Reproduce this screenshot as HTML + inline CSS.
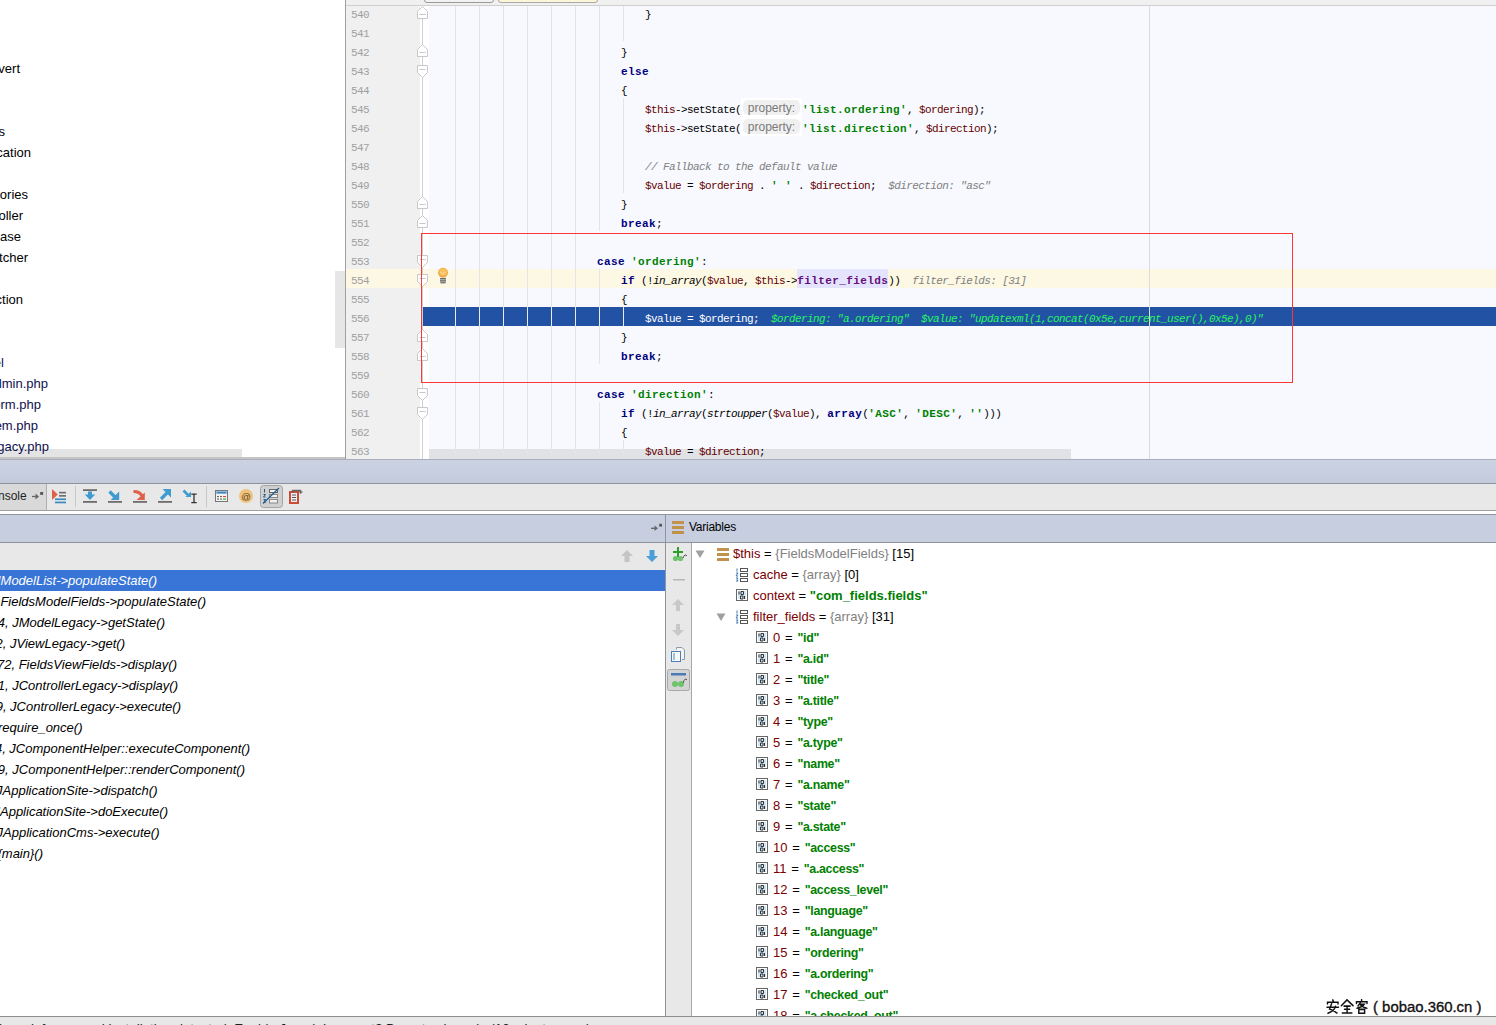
<!DOCTYPE html>
<html><head><meta charset="utf-8">
<style>
*{margin:0;padding:0;box-sizing:border-box}
html,body{width:1496px;height:1025px;overflow:hidden;background:#fff;font-family:"Liberation Sans",sans-serif}
.a{position:absolute}
#tree{left:0;top:0;width:345px;height:459px;background:#fff;overflow:hidden}
#tree .t{position:absolute;font-size:13px;line-height:21px;height:21px;padding-top:1px;color:#000;white-space:nowrap}
#tree .m{color:#101050}
.ln{position:absolute;left:351px;font-family:"Liberation Mono",monospace;font-size:11px;letter-spacing:-0.6px;color:#a0a0a0;height:19px;line-height:19px;padding-top:3px}
.code{position:absolute;font-family:"Liberation Mono",monospace;font-size:11px;letter-spacing:-0.6px;white-space:pre;height:19px;line-height:19px;color:#000;padding-top:3px}
.kw{color:#000080;font-weight:bold;letter-spacing:0.4px}
.st{color:#008000;font-weight:bold;letter-spacing:0.4px}
.v{color:#660000}
.it{font-style:italic}
.cm{color:#808080;font-style:italic}
.hint{color:#808080;font-style:italic}
.fld{color:#660e7a;font-weight:bold;letter-spacing:0.4px;background:#e4e4ff;display:inline-block;height:19px;margin-top:-3px;padding-top:3px;vertical-align:top}
.wh{color:#fff}
.gv{color:#25f560;font-style:italic}
.prop{display:inline-block;width:61px;height:19px;margin-top:-3px;vertical-align:top;background:#fff;font-family:"Liberation Sans",sans-serif;font-size:12px;letter-spacing:0;color:#7a7a7a;text-align:center;padding:2px 2px 0 2px}
.prop i{display:block;font-style:normal;height:15px;line-height:17px;background:#f0f0f0;border-radius:5px}
.fr{position:absolute;font-style:italic;font-size:13px;white-space:nowrap;color:#000;line-height:21px;height:21px}
.vr{position:absolute;font-size:13px;white-space:nowrap;line-height:21px;height:21px;color:#000}
.vr .n{color:#7a0000}
.vr .g{color:#808080}
.vr .s{color:#008000;font-weight:bold}
.vr.ix{word-spacing:1.2px}
.vr.ix .s{letter-spacing:-0.3px;word-spacing:0;font-size:12.4px}
</style></head><body>
<div id="tree" class="a">
<div class="a" style="left:335px;top:271px;width:10px;height:77px;background:#e6e6e6"></div>
<div class="a" style="left:0;top:449px;width:242px;height:8px;background:#e4e4e4"></div>
<div class="a" style="left:0;top:457px;width:345px;height:2px;background:#c4c4c4"></div>
<div class="t" style="right:325px;top:57px">convert</div>
<div class="t" style="right:340px;top:120px">errors</div>
<div class="t" style="right:314px;top:141px">application</div>
<div class="t" style="right:317px;top:183px">categories</div>
<div class="t" style="right:322px;top:204px">controller</div>
<div class="t" style="right:324px;top:225px">database</div>
<div class="t" style="right:317px;top:246px">dispatcher</div>
<div class="t" style="right:322px;top:288px">connection</div>
<div class="t m" style="right:341px;top:351px">model</div>
<div class="t m" style="right:297px;top:372px">admin.php</div>
<div class="t m" style="right:304px;top:393px">form.php</div>
<div class="t m" style="right:307px;top:414px">item.php</div>
<div class="t m" style="right:296px;top:435px">legacy.php</div>
</div>
<div class="a" style="left:345px;top:0;width:1151px;height:459px;background:#f7f9fe"></div>
<div class="a" style="left:345px;top:0;width:1151px;height:6px;background:#f0f0f0;border-bottom:1px solid #cfcfcf"></div>
<div class="a" style="left:424px;top:-4px;width:70px;height:7px;background:#f2f2f2;border:1px solid #9a9a9a;border-radius:0 0 3px 3px"></div>
<div class="a" style="left:498px;top:-4px;width:100px;height:7px;background:#fcf6d6;border:1px solid #a8a8a8;border-radius:0 0 3px 3px"></div>
<div class="a" style="left:345px;top:0;width:1px;height:459px;background:#a0a0a0"></div>
<div class="a" style="left:346px;top:6px;width:74px;height:453px;background:#f0f0f0"></div>
<div class="a" style="left:420px;top:6px;width:9px;height:453px;background:#fff"></div>
<div class="a" style="left:346px;top:269px;width:1150px;height:19px;background:#fdf8e4"></div>
<div class="a" style="left:423px;top:307px;width:1073px;height:19px;background:#2252a4"></div>
<div class="a" style="left:429px;top:449px;width:642px;height:10px;background:#e0e2e6"></div>
<svg class="a" style="left:0;top:0" width="1496" height="459">
<rect x="455" y="6" width="1" height="453" fill="#e2e4e8"/>
<rect x="479" y="6" width="1" height="453" fill="#e2e4e8"/>
<rect x="503" y="6" width="1" height="453" fill="#e2e4e8"/>
<rect x="527" y="6" width="1" height="453" fill="#e2e4e8"/>
<rect x="551" y="6" width="1" height="453" fill="#e2e4e8"/>
<rect x="575" y="6" width="1" height="453" fill="#e2e4e8"/>
<rect x="599" y="6" width="1" height="225" fill="#e2e4e8"/>
<rect x="599" y="269" width="1" height="95" fill="#e2e4e8"/>
<rect x="599" y="402" width="1" height="57" fill="#e2e4e8"/>
<rect x="623" y="6" width="1" height="35" fill="#e2e4e8"/>
<rect x="623" y="98" width="1" height="95" fill="#e2e4e8"/>
<rect x="623" y="307" width="1" height="19" fill="#e2e4e8"/>
<rect x="623" y="440" width="1" height="19" fill="#e2e4e8"/>
<rect x="1149" y="6" width="1" height="453" fill="#dcdcdc"/>
<rect x="455" y="307" width="1" height="19" fill="#e6ebf5"/>
<rect x="479" y="307" width="1" height="19" fill="#e6ebf5"/>
<rect x="503" y="307" width="1" height="19" fill="#e6ebf5"/>
<rect x="527" y="307" width="1" height="19" fill="#e6ebf5"/>
<rect x="551" y="307" width="1" height="19" fill="#e6ebf5"/>
<rect x="575" y="307" width="1" height="19" fill="#e6ebf5"/>
<rect x="599" y="307" width="1" height="19" fill="#e6ebf5"/>
<rect x="623" y="307" width="1" height="19" fill="#e6ebf5"/>
<rect x="422" y="12" width="1" height="447" fill="#cfcfcf"/>
<path d="M417.5 18.5V11.5L422.5 6.5L427.5 11.5V18.5Z" fill="#fff" stroke="#c8c8c8"/>
<path d="M419.5 14.5H425.5" stroke="#c8c8c8"/>
<path d="M417.5 56.5V49.5L422.5 44.5L427.5 49.5V56.5Z" fill="#fff" stroke="#c8c8c8"/>
<path d="M419.5 52.5H425.5" stroke="#c8c8c8"/>
<path d="M417.5 208.5V201.5L422.5 196.5L427.5 201.5V208.5Z" fill="#fff" stroke="#c8c8c8"/>
<path d="M419.5 204.5H425.5" stroke="#c8c8c8"/>
<path d="M417.5 227.5V220.5L422.5 215.5L427.5 220.5V227.5Z" fill="#fff" stroke="#c8c8c8"/>
<path d="M419.5 223.5H425.5" stroke="#c8c8c8"/>
<path d="M417.5 341.5V334.5L422.5 329.5L427.5 334.5V341.5Z" fill="#fff" stroke="#c8c8c8"/>
<path d="M419.5 337.5H425.5" stroke="#c8c8c8"/>
<path d="M417.5 360.5V353.5L422.5 348.5L427.5 353.5V360.5Z" fill="#fff" stroke="#c8c8c8"/>
<path d="M419.5 356.5H425.5" stroke="#c8c8c8"/>
<path d="M417.5 65.5H427.5V72.5L422.5 77.5L417.5 72.5Z" fill="#fff" stroke="#c8c8c8"/>
<path d="M419.5 69.5H425.5" stroke="#c8c8c8"/>
<path d="M417.5 255.5H427.5V262.5L422.5 267.5L417.5 262.5Z" fill="#fff" stroke="#c8c8c8"/>
<path d="M419.5 259.5H425.5" stroke="#c8c8c8"/>
<path d="M417.5 274.5H427.5V281.5L422.5 286.5L417.5 281.5Z" fill="#fff" stroke="#c8c8c8"/>
<path d="M419.5 278.5H425.5" stroke="#c8c8c8"/>
<path d="M417.5 388.5H427.5V395.5L422.5 400.5L417.5 395.5Z" fill="#fff" stroke="#c8c8c8"/>
<path d="M419.5 392.5H425.5" stroke="#c8c8c8"/>
<path d="M417.5 407.5H427.5V414.5L422.5 419.5L417.5 414.5Z" fill="#fff" stroke="#c8c8c8"/>
<path d="M419.5 411.5H425.5" stroke="#c8c8c8"/>
<circle cx="443" cy="272.8" r="5.6" fill="#fffef5" opacity="0.8"/><circle cx="443" cy="272.8" r="5" fill="#f2ad45"/><circle cx="443" cy="272" r="3.6" fill="#f7c25e"/>
<path d="M440.5 272.3h1M444.5 272.3h1M442.3 273.8h1.4" stroke="#fff6d0" stroke-width="1"/>
<rect x="440" y="277.8" width="6" height="5.4" rx="1" fill="#b4b0a8"/><rect x="440" y="278" width="6" height="1.1" fill="#6f7072"/><rect x="440" y="280.2" width="6" height="1.1" fill="#6f7072"/><rect x="440.6" y="282.2" width="4.8" height="1.1" fill="#6f7072"/>
<rect x="421.5" y="233.5" width="871" height="149" fill="none" stroke="#ff3535"/>
</svg>
<div class="ln" style="top:3px">540</div>
<div class="ln" style="top:22px">541</div>
<div class="ln" style="top:41px">542</div>
<div class="ln" style="top:60px">543</div>
<div class="ln" style="top:79px">544</div>
<div class="ln" style="top:98px">545</div>
<div class="ln" style="top:117px">546</div>
<div class="ln" style="top:136px">547</div>
<div class="ln" style="top:155px">548</div>
<div class="ln" style="top:174px">549</div>
<div class="ln" style="top:193px">550</div>
<div class="ln" style="top:212px">551</div>
<div class="ln" style="top:231px">552</div>
<div class="ln" style="top:250px">553</div>
<div class="ln" style="top:269px">554</div>
<div class="ln" style="top:288px">555</div>
<div class="ln" style="top:307px">556</div>
<div class="ln" style="top:326px">557</div>
<div class="ln" style="top:345px">558</div>
<div class="ln" style="top:364px">559</div>
<div class="ln" style="top:383px">560</div>
<div class="ln" style="top:402px">561</div>
<div class="ln" style="top:421px">562</div>
<div class="ln" style="top:440px">563</div>
<div class="code" style="top:3px;left:645px">}</div>
<div class="code" style="top:41px;left:621px">}</div>
<div class="code" style="top:60px;left:621px"><span class="kw">else</span></div>
<div class="code" style="top:79px;left:621px">{</div>
<div class="code" style="top:98px;left:645px"><span class="v">$this</span>-&gt;setState(<span class="prop"><i>property:</i></span><span class="st">'list.ordering'</span>, <span class="v">$ordering</span>);</div>
<div class="code" style="top:117px;left:645px"><span class="v">$this</span>-&gt;setState(<span class="prop"><i>property:</i></span><span class="st">'list.direction'</span>, <span class="v">$direction</span>);</div>
<div class="code" style="top:155px;left:645px"><span class="cm">// Fallback to the default value</span></div>
<div class="code" style="top:174px;left:645px"><span class="v">$value</span> = <span class="v">$ordering</span> . <span class="st">' '</span> . <span class="v">$direction</span>;  <span class="hint">$direction: "asc"</span></div>
<div class="code" style="top:193px;left:621px">}</div>
<div class="code" style="top:212px;left:621px"><span class="kw">break</span>;</div>
<div class="code" style="top:250px;left:597px"><span class="kw">case</span> <span class="st">'ordering'</span>:</div>
<div class="code" style="top:269px;left:621px"><span class="kw">if</span> (!<span class="it">in_array</span>(<span class="v">$value</span>, <span class="v">$this</span>-&gt;<span class="fld">filter_fields</span>))  <span class="hint">filter_fields: [31]</span></div>
<div class="code" style="top:288px;left:621px">{</div>
<div class="code" style="top:307px;left:645px"><span class="wh">$value = $ordering;  </span><span class="gv">$ordering: "a.ordering"  $value: "updatexml(1,concat(0x5e,current_user(),0x5e),0)"</span></div>
<div class="code" style="top:326px;left:621px">}</div>
<div class="code" style="top:345px;left:621px"><span class="kw">break</span>;</div>
<div class="code" style="top:383px;left:597px"><span class="kw">case</span> <span class="st">'direction'</span>:</div>
<div class="code" style="top:402px;left:621px"><span class="kw">if</span> (!<span class="it">in_array</span>(<span class="it">strtoupper</span>(<span class="v">$value</span>), <span class="kw">array</span>(<span class="st">'ASC'</span>, <span class="st">'DESC'</span>, <span class="st">''</span>)))</div>
<div class="code" style="top:421px;left:621px">{</div>
<div class="code" style="top:440px;left:645px"><span class="v">$value</span> = <span class="v">$direction</span>;</div>
<div class="a" style="left:0;top:459px;width:1496px;height:24px;background:linear-gradient(#cbd3e3,#c2cadc);border-top:1px solid #a8aebb"></div>
<!-- toolbar -->
<div class="a" style="left:0;top:483px;width:1496px;height:28px;background:#e8e8e8;border-top:1px solid #8d939e;border-bottom:1px solid #a0a0a0"></div>
<div class="a" style="left:0;top:484px;width:47px;height:26px;background:#d9d9d9;border-right:1px solid #b0b0b0"></div>
<div class="a" style="left:-2px;top:486px;font-size:12px;line-height:20px;color:#222;white-space:nowrap">nsole</div>
<svg class="a" style="left:0;top:481px" width="320" height="30">
 <path d="M32 15.5H36" stroke="#666" stroke-width="1.3"/><path d="M35.5 12.6L39 15.5L35.5 18.4Z" fill="#666"/><rect x="40.2" y="11" width="2.9" height="2.9" fill="#555"/>
 <path d="M52 8L57.8 13.5L52 19Z" fill="#e0604c"/><rect x="59" y="10.8" width="7" height="1.7" fill="#707070"/><rect x="59" y="14" width="7" height="1.7" fill="#707070"/><rect x="55" y="17.4" width="11" height="1.7" fill="#3d88bd"/><rect x="55" y="20.6" width="11" height="1.7" fill="#3d88bd"/>
 <rect x="75" y="5" width="1" height="21" fill="#c8c8c8"/>
 <rect x="83" y="8.2" width="14" height="1.8" fill="#6d6d6d"/><rect x="88" y="10.5" width="4" height="3.5" fill="#3d9bd0"/><path d="M84.8 13.5H95.2L90 19Z" fill="#3d9bd0"/><rect x="83" y="20" width="14" height="1.8" fill="#6d6d6d"/>
 <path d="M109.5 10.5L116 17" stroke="#3d9bd0" stroke-width="3.2"/><path d="M119.2 10.5V19H110.7Z" fill="#3d9bd0"/><rect x="108" y="20" width="14" height="1.8" fill="#6d6d6d"/>
 <path d="M133.5 10.5Q140 10.5 142 15" fill="none" stroke="#e0604c" stroke-width="3.2"/><path d="M144.8 11.5V19H136.5Z" fill="#e0604c"/><rect x="133" y="20" width="14" height="1.8" fill="#6d6d6d"/>
 <path d="M161 18L167.5 11.5" stroke="#3d9bd0" stroke-width="3.2"/><path d="M171 8V16.5L162.5 8Z" fill="#3d9bd0"/><rect x="158" y="20" width="14" height="1.8" fill="#6d6d6d"/>
 <path d="M183.5 9.5L188 14" stroke="#3d9bd0" stroke-width="2.6"/><path d="M191 10.5V16H185.5Z" fill="#3d9bd0"/><path d="M191.3 13.2H196.7M194 13.2V21.6M191.3 21.6H196.7" stroke="#333" stroke-width="1.3" fill="none"/>
 <rect x="206" y="5" width="1" height="21.5" fill="#c8c8c8"/>
 <rect x="215.5" y="9.5" width="12" height="11" fill="#f2f2f2" stroke="#777"/><rect x="216" y="10" width="11" height="3" fill="#8cc0e6"/><rect x="217" y="11" width="9" height="1.2" fill="#4a80b0"/>
 <rect x="217" y="15" width="2" height="1.1" fill="#666"/><rect x="220" y="15" width="2" height="1.1" fill="#666"/><rect x="223" y="15" width="3" height="1.1" fill="#e04040"/><rect x="217" y="17.5" width="2" height="1.1" fill="#666"/><rect x="220" y="17.5" width="2" height="1.1" fill="#666"/><rect x="223" y="17.5" width="3" height="1.1" fill="#20b020"/>
 <circle cx="246" cy="15" r="7" fill="#f0c37c"/><text x="246" y="18.6" font-size="9.5" text-anchor="middle" fill="#5a4020" font-family="Liberation Sans">@</text>
 <rect x="260.5" y="4.5" width="22" height="22" rx="3" fill="#d0d0d0" stroke="#a4a4a4"/>
 <rect x="269.5" y="8.5" width="8" height="3" fill="#f0f0f0" stroke="#666"/><rect x="269.5" y="13.5" width="8" height="3" fill="#f0f0f0" stroke="#888"/><rect x="269.5" y="18.5" width="8" height="3.5" fill="#f0f0f0" stroke="#888"/>
 <path d="M264.5 8V11.5M263.5 13.5H265.5L263.5 16H265.5M263.5 18.5H265.5L264.5 19.8L265.5 21.3H263.5" fill="none" stroke="#1d5a90" stroke-width="1"/>
 <path d="M263 22.5L279 7" stroke="#1d5a90" stroke-width="1.1"/>
 <rect x="290" y="11" width="8" height="11" fill="#f4f4f4" stroke="#d04a38" stroke-width="2"/><rect x="292" y="13.5" width="4" height="1" fill="#555"/><rect x="292" y="16" width="4" height="1" fill="#555"/><rect x="292" y="18.5" width="4" height="1" fill="#555"/>
 <path d="M292.5 12V9.5H300.5V11" fill="none" stroke="#666" stroke-width="1.3"/><path d="M298.5 10.5H303L300.7 13Z" fill="#666"/>
</svg>
<div class="a" style="left:0;top:511px;width:1496px;height:3px;background:#fff"></div>
<!-- panel headers -->
<div class="a" style="left:0;top:514px;width:1496px;height:29px;background:#c6cee0;border-top:1px solid #8e939c;border-bottom:1px solid #8e939c"></div>
<svg class="a" style="left:640px;top:514px" width="60" height="29">
 <path d="M11 14.3H15" stroke="#666" stroke-width="1.3"/><path d="M14.5 11.6L18 14.3L14.5 17Z" fill="#666"/><rect x="19.2" y="9.8" width="2.8" height="2.8" fill="#555"/>
 <rect x="32" y="7" width="12" height="3" fill="#c0924a"/><rect x="32" y="12" width="12" height="3" fill="#c0924a"/><rect x="32" y="17" width="12" height="3" fill="#c0924a"/>
</svg>
<div class="a" style="left:689px;top:517px;font-size:12px;letter-spacing:-0.25px;line-height:20px;color:#000;white-space:nowrap">Variables</div>
<!-- frames -->
<div class="a" style="left:0;top:543px;width:665px;height:27px;background:#e8e8e8"></div>
<svg class="a" style="left:610px;top:543px" width="55" height="27">
 <path d="M17 7L23 13H19.5V19H14.5V13H11Z" fill="#c4c4c4"/>
 <path d="M42 19L48 13H44.5V7H39.5V13H36Z" fill="#4a9fd8"/>
</svg>
<div class="a" style="left:0;top:570px;width:665px;height:446px;background:#fff"></div>
<div class="a" style="left:0;top:570px;width:665px;height:21px;background:#3875d7"></div>
<div class="fr" style="right:1339px;top:570px;color:#fff">JModelList-&gt;populateState()</div>
<div class="fr" style="right:1290px;top:591px;color:#000">FieldsModelFields-&gt;populateState()</div>
<div class="fr" style="right:1331px;top:612px;color:#000">334, JModelLegacy-&gt;getState()</div>
<div class="fr" style="right:1371px;top:633px;color:#000">222, JViewLegacy-&gt;get()</div>
<div class="fr" style="right:1319px;top:654px;color:#000">72, FieldsViewFields-&gt;display()</div>
<div class="fr" style="right:1318px;top:675px;color:#000">301, JControllerLegacy-&gt;display()</div>
<div class="fr" style="right:1315px;top:696px;color:#000">709, JControllerLegacy-&gt;execute()</div>
<div class="fr" style="right:1413.5px;top:717px;color:#000">fields.php:19, require_once()</div>
<div class="fr" style="right:1246px;top:738px;color:#000">384, JComponentHelper::executeComponent()</div>
<div class="fr" style="right:1251px;top:759px;color:#000">359, JComponentHelper::renderComponent()</div>
<div class="fr" style="right:1338.5px;top:780px;color:#000">JApplicationSite-&gt;dispatch()</div>
<div class="fr" style="right:1328px;top:801px;color:#000">JApplicationSite-&gt;doExecute()</div>
<div class="fr" style="right:1336.5px;top:822px;color:#000">JApplicationCms-&gt;execute()</div>
<div class="fr" style="right:1453px;top:843px;color:#000">index.php:49, {main}()</div>
<div class="a" style="left:665px;top:514px;width:1px;height:502px;background:#8e939c"></div>
<!-- variables -->
<div class="a" style="left:666px;top:543px;width:26px;height:473px;background:#e8e8e8;border-right:1px solid #a8a8a8"></div>
<svg class="a" style="left:666px;top:543px" width="25" height="160">
 <path d="M12 4V14M7 9H17" stroke="#2aa02a" stroke-width="2"/><circle cx="9.5" cy="15.5" r="2.6" fill="#6dc46d"/><circle cx="14.5" cy="15.5" r="2.6" fill="#6dc46d"/><path d="M17 15Q19 10 21 13" fill="none" stroke="#555" stroke-width="1"/>
 <rect x="7" y="36" width="12" height="1.5" fill="#b8b8b8"/>
 <path d="M12 56L18 62H14V68H10V62H6Z" fill="#c8c8c8"/>
 <path d="M12 93L18 87H14V81H10V87H6Z" fill="#c8c8c8"/>
 <path d="M10.5 106.5V104.5H16L18.5 107V116.5H16" fill="#f4f4f4" stroke="#8a9aa8"/><rect x="5.5" y="108.5" width="9" height="10" fill="#f8f8f8" stroke="#4a80b8"/><rect x="7" y="110" width="2" height="7" fill="#9cc0e0"/>
 <rect x="1.5" y="126.5" width="22" height="21" rx="2" fill="#d4d4d4" stroke="#a8a8a8"/>
 <rect x="5" y="130" width="15" height="2.5" fill="#4a7bb5"/><circle cx="9" cy="141" r="3" fill="#6dc46d"/><circle cx="15" cy="141" r="3" fill="#6dc46d"/><path d="M17 140Q19 134 21 137" fill="none" stroke="#555" stroke-width="1"/>
</svg>
<div class="a" style="left:692px;top:543px;width:804px;height:473px;background:#fff;overflow:hidden">
<svg class="a" style="left:3px;top:6px" width="10" height="10"><path d="M0.5 1.5H9.5L5 9Z" fill="#a0a0a0"/></svg><svg class="a" style="left:24px;top:4px" width="14" height="14"><rect x="1" y="1" width="12" height="3" fill="#c0924a"/><rect x="1" y="6" width="12" height="3" fill="#c0924a"/><rect x="1" y="11" width="12" height="3" fill="#c0924a"/></svg>
<div class="vr" style="left:41px;top:0px"><span class="n">$this</span> = <span class="g">{FieldsModelFields}</span> [15]</div>
<svg class="a" style="left:43px;top:25px" width="14" height="14"><rect x="5.5" y="0.5" width="7" height="3" fill="none" stroke="#555"/><rect x="5.5" y="5.5" width="7" height="3" fill="none" stroke="#555"/><rect x="5.5" y="10.5" width="7" height="3" fill="none" stroke="#555"/><path d="M2 0.5V3.5M1 5H3L1 8H3M1 10H3L2 11.5L3 13H1" fill="none" stroke="#2a6cb0" stroke-width="0.9"/></svg>
<div class="vr" style="left:61px;top:21px"><span class="n">cache</span> = <span class="g">{array}</span> [0]</div>
<svg class="a" style="left:44px;top:46px" width="13" height="13"><rect x="0.5" y="0.5" width="11" height="11" fill="#fff" stroke="#666"/><rect x="2" y="2" width="8" height="8" fill="#cfe6f5"/><path d="M3 2.5V5.5M5 2.5H7.5V5.5H5ZM4.5 7H7V10H4.5ZM8.5 7V10" fill="none" stroke="#333" stroke-width="1"/></svg>
<div class="vr" style="left:61px;top:42px"><span class="n">context</span> = <span class="s">"com_fields.fields"</span></div>
<svg class="a" style="left:24px;top:69px" width="10" height="10"><path d="M0.5 1.5H9.5L5 9Z" fill="#a0a0a0"/></svg><svg class="a" style="left:43px;top:67px" width="14" height="14"><rect x="5.5" y="0.5" width="7" height="3" fill="none" stroke="#555"/><rect x="5.5" y="5.5" width="7" height="3" fill="none" stroke="#555"/><rect x="5.5" y="10.5" width="7" height="3" fill="none" stroke="#555"/><path d="M2 0.5V3.5M1 5H3L1 8H3M1 10H3L2 11.5L3 13H1" fill="none" stroke="#2a6cb0" stroke-width="0.9"/></svg>
<div class="vr" style="left:61px;top:63px"><span class="n">filter_fields</span> = <span class="g">{array}</span> [31]</div>
<svg class="a" style="left:64px;top:88px" width="13" height="13"><rect x="0.5" y="0.5" width="11" height="11" fill="#fff" stroke="#666"/><rect x="2" y="2" width="8" height="8" fill="#cfe6f5"/><path d="M3 2.5V5.5M5 2.5H7.5V5.5H5ZM4.5 7H7V10H4.5ZM8.5 7V10" fill="none" stroke="#333" stroke-width="1"/></svg>
<div class="vr ix" style="left:81px;top:84px"><span class="n">0</span> = <span class="s">"id"</span></div>
<svg class="a" style="left:64px;top:109px" width="13" height="13"><rect x="0.5" y="0.5" width="11" height="11" fill="#fff" stroke="#666"/><rect x="2" y="2" width="8" height="8" fill="#cfe6f5"/><path d="M3 2.5V5.5M5 2.5H7.5V5.5H5ZM4.5 7H7V10H4.5ZM8.5 7V10" fill="none" stroke="#333" stroke-width="1"/></svg>
<div class="vr ix" style="left:81px;top:105px"><span class="n">1</span> = <span class="s">"a.id"</span></div>
<svg class="a" style="left:64px;top:130px" width="13" height="13"><rect x="0.5" y="0.5" width="11" height="11" fill="#fff" stroke="#666"/><rect x="2" y="2" width="8" height="8" fill="#cfe6f5"/><path d="M3 2.5V5.5M5 2.5H7.5V5.5H5ZM4.5 7H7V10H4.5ZM8.5 7V10" fill="none" stroke="#333" stroke-width="1"/></svg>
<div class="vr ix" style="left:81px;top:126px"><span class="n">2</span> = <span class="s">"title"</span></div>
<svg class="a" style="left:64px;top:151px" width="13" height="13"><rect x="0.5" y="0.5" width="11" height="11" fill="#fff" stroke="#666"/><rect x="2" y="2" width="8" height="8" fill="#cfe6f5"/><path d="M3 2.5V5.5M5 2.5H7.5V5.5H5ZM4.5 7H7V10H4.5ZM8.5 7V10" fill="none" stroke="#333" stroke-width="1"/></svg>
<div class="vr ix" style="left:81px;top:147px"><span class="n">3</span> = <span class="s">"a.title"</span></div>
<svg class="a" style="left:64px;top:172px" width="13" height="13"><rect x="0.5" y="0.5" width="11" height="11" fill="#fff" stroke="#666"/><rect x="2" y="2" width="8" height="8" fill="#cfe6f5"/><path d="M3 2.5V5.5M5 2.5H7.5V5.5H5ZM4.5 7H7V10H4.5ZM8.5 7V10" fill="none" stroke="#333" stroke-width="1"/></svg>
<div class="vr ix" style="left:81px;top:168px"><span class="n">4</span> = <span class="s">"type"</span></div>
<svg class="a" style="left:64px;top:193px" width="13" height="13"><rect x="0.5" y="0.5" width="11" height="11" fill="#fff" stroke="#666"/><rect x="2" y="2" width="8" height="8" fill="#cfe6f5"/><path d="M3 2.5V5.5M5 2.5H7.5V5.5H5ZM4.5 7H7V10H4.5ZM8.5 7V10" fill="none" stroke="#333" stroke-width="1"/></svg>
<div class="vr ix" style="left:81px;top:189px"><span class="n">5</span> = <span class="s">"a.type"</span></div>
<svg class="a" style="left:64px;top:214px" width="13" height="13"><rect x="0.5" y="0.5" width="11" height="11" fill="#fff" stroke="#666"/><rect x="2" y="2" width="8" height="8" fill="#cfe6f5"/><path d="M3 2.5V5.5M5 2.5H7.5V5.5H5ZM4.5 7H7V10H4.5ZM8.5 7V10" fill="none" stroke="#333" stroke-width="1"/></svg>
<div class="vr ix" style="left:81px;top:210px"><span class="n">6</span> = <span class="s">"name"</span></div>
<svg class="a" style="left:64px;top:235px" width="13" height="13"><rect x="0.5" y="0.5" width="11" height="11" fill="#fff" stroke="#666"/><rect x="2" y="2" width="8" height="8" fill="#cfe6f5"/><path d="M3 2.5V5.5M5 2.5H7.5V5.5H5ZM4.5 7H7V10H4.5ZM8.5 7V10" fill="none" stroke="#333" stroke-width="1"/></svg>
<div class="vr ix" style="left:81px;top:231px"><span class="n">7</span> = <span class="s">"a.name"</span></div>
<svg class="a" style="left:64px;top:256px" width="13" height="13"><rect x="0.5" y="0.5" width="11" height="11" fill="#fff" stroke="#666"/><rect x="2" y="2" width="8" height="8" fill="#cfe6f5"/><path d="M3 2.5V5.5M5 2.5H7.5V5.5H5ZM4.5 7H7V10H4.5ZM8.5 7V10" fill="none" stroke="#333" stroke-width="1"/></svg>
<div class="vr ix" style="left:81px;top:252px"><span class="n">8</span> = <span class="s">"state"</span></div>
<svg class="a" style="left:64px;top:277px" width="13" height="13"><rect x="0.5" y="0.5" width="11" height="11" fill="#fff" stroke="#666"/><rect x="2" y="2" width="8" height="8" fill="#cfe6f5"/><path d="M3 2.5V5.5M5 2.5H7.5V5.5H5ZM4.5 7H7V10H4.5ZM8.5 7V10" fill="none" stroke="#333" stroke-width="1"/></svg>
<div class="vr ix" style="left:81px;top:273px"><span class="n">9</span> = <span class="s">"a.state"</span></div>
<svg class="a" style="left:64px;top:298px" width="13" height="13"><rect x="0.5" y="0.5" width="11" height="11" fill="#fff" stroke="#666"/><rect x="2" y="2" width="8" height="8" fill="#cfe6f5"/><path d="M3 2.5V5.5M5 2.5H7.5V5.5H5ZM4.5 7H7V10H4.5ZM8.5 7V10" fill="none" stroke="#333" stroke-width="1"/></svg>
<div class="vr ix" style="left:81px;top:294px"><span class="n">10</span> = <span class="s">"access"</span></div>
<svg class="a" style="left:64px;top:319px" width="13" height="13"><rect x="0.5" y="0.5" width="11" height="11" fill="#fff" stroke="#666"/><rect x="2" y="2" width="8" height="8" fill="#cfe6f5"/><path d="M3 2.5V5.5M5 2.5H7.5V5.5H5ZM4.5 7H7V10H4.5ZM8.5 7V10" fill="none" stroke="#333" stroke-width="1"/></svg>
<div class="vr ix" style="left:81px;top:315px"><span class="n">11</span> = <span class="s">"a.access"</span></div>
<svg class="a" style="left:64px;top:340px" width="13" height="13"><rect x="0.5" y="0.5" width="11" height="11" fill="#fff" stroke="#666"/><rect x="2" y="2" width="8" height="8" fill="#cfe6f5"/><path d="M3 2.5V5.5M5 2.5H7.5V5.5H5ZM4.5 7H7V10H4.5ZM8.5 7V10" fill="none" stroke="#333" stroke-width="1"/></svg>
<div class="vr ix" style="left:81px;top:336px"><span class="n">12</span> = <span class="s">"access_level"</span></div>
<svg class="a" style="left:64px;top:361px" width="13" height="13"><rect x="0.5" y="0.5" width="11" height="11" fill="#fff" stroke="#666"/><rect x="2" y="2" width="8" height="8" fill="#cfe6f5"/><path d="M3 2.5V5.5M5 2.5H7.5V5.5H5ZM4.5 7H7V10H4.5ZM8.5 7V10" fill="none" stroke="#333" stroke-width="1"/></svg>
<div class="vr ix" style="left:81px;top:357px"><span class="n">13</span> = <span class="s">"language"</span></div>
<svg class="a" style="left:64px;top:382px" width="13" height="13"><rect x="0.5" y="0.5" width="11" height="11" fill="#fff" stroke="#666"/><rect x="2" y="2" width="8" height="8" fill="#cfe6f5"/><path d="M3 2.5V5.5M5 2.5H7.5V5.5H5ZM4.5 7H7V10H4.5ZM8.5 7V10" fill="none" stroke="#333" stroke-width="1"/></svg>
<div class="vr ix" style="left:81px;top:378px"><span class="n">14</span> = <span class="s">"a.language"</span></div>
<svg class="a" style="left:64px;top:403px" width="13" height="13"><rect x="0.5" y="0.5" width="11" height="11" fill="#fff" stroke="#666"/><rect x="2" y="2" width="8" height="8" fill="#cfe6f5"/><path d="M3 2.5V5.5M5 2.5H7.5V5.5H5ZM4.5 7H7V10H4.5ZM8.5 7V10" fill="none" stroke="#333" stroke-width="1"/></svg>
<div class="vr ix" style="left:81px;top:399px"><span class="n">15</span> = <span class="s">"ordering"</span></div>
<svg class="a" style="left:64px;top:424px" width="13" height="13"><rect x="0.5" y="0.5" width="11" height="11" fill="#fff" stroke="#666"/><rect x="2" y="2" width="8" height="8" fill="#cfe6f5"/><path d="M3 2.5V5.5M5 2.5H7.5V5.5H5ZM4.5 7H7V10H4.5ZM8.5 7V10" fill="none" stroke="#333" stroke-width="1"/></svg>
<div class="vr ix" style="left:81px;top:420px"><span class="n">16</span> = <span class="s">"a.ordering"</span></div>
<svg class="a" style="left:64px;top:445px" width="13" height="13"><rect x="0.5" y="0.5" width="11" height="11" fill="#fff" stroke="#666"/><rect x="2" y="2" width="8" height="8" fill="#cfe6f5"/><path d="M3 2.5V5.5M5 2.5H7.5V5.5H5ZM4.5 7H7V10H4.5ZM8.5 7V10" fill="none" stroke="#333" stroke-width="1"/></svg>
<div class="vr ix" style="left:81px;top:441px"><span class="n">17</span> = <span class="s">"checked_out"</span></div>
<svg class="a" style="left:64px;top:466px" width="13" height="13"><rect x="0.5" y="0.5" width="11" height="11" fill="#fff" stroke="#666"/><rect x="2" y="2" width="8" height="8" fill="#cfe6f5"/><path d="M3 2.5V5.5M5 2.5H7.5V5.5H5ZM4.5 7H7V10H4.5ZM8.5 7V10" fill="none" stroke="#333" stroke-width="1"/></svg>
<div class="vr ix" style="left:81px;top:462px"><span class="n">18</span> = <span class="s">"a.checked_out"</span></div>
</div>
<!-- status -->
<div class="a" style="left:0;top:1016px;width:1496px;height:9px;background:#e8e8e8;border-top:1px solid #8e8e8e;overflow:hidden">
<div class="a" style="left:-1px;top:5px;font-size:13.4px;line-height:14px;color:#222;white-space:nowrap">lework for manual installation detected: Enable Joomla! support? Do not ask again (10 minutes ago)</div>
</div>
<svg class="a" style="left:1326px;top:999px" width="44" height="16"><g fill="none" stroke="#111" stroke-width="1.45" stroke-linecap="round" transform="scale(1,1.08)">
<path d="M6.8 0.8L7.3 2.2M1.5 4.6V3H12V4.6M5.6 4.4L3.6 9.2Q7.5 10.3 11 13M9.4 6.8Q8.4 11 2 13.2M1 7.6H12.5"/>
<g transform="translate(14.5,0)"><path d="M6.5 0.8L0.8 6.2M6.5 0.8L12.5 6.2M3.6 6.6H9.6M4 9.5H9.2M1.8 13H11.4M6.6 6.6V13"/></g>
<g transform="translate(29,0)"><path d="M6.6 0.6V2M1.5 4.2V2.6H12V4.2M5.2 3.6L3 6.4M5 4.8H9.2Q7.2 7.4 2 8.6M5.8 5.8Q8.2 7.8 11.8 8.6M3.8 9.6V13.2H9.6V9.6Z"/></g>
</g></svg>
<div class="a" style="left:1373px;top:998px;font-size:14.9px;line-height:18px;color:#111;white-space:nowrap;-webkit-text-stroke:0.35px #111">( bobao.360.cn )</div>
</body></html>
